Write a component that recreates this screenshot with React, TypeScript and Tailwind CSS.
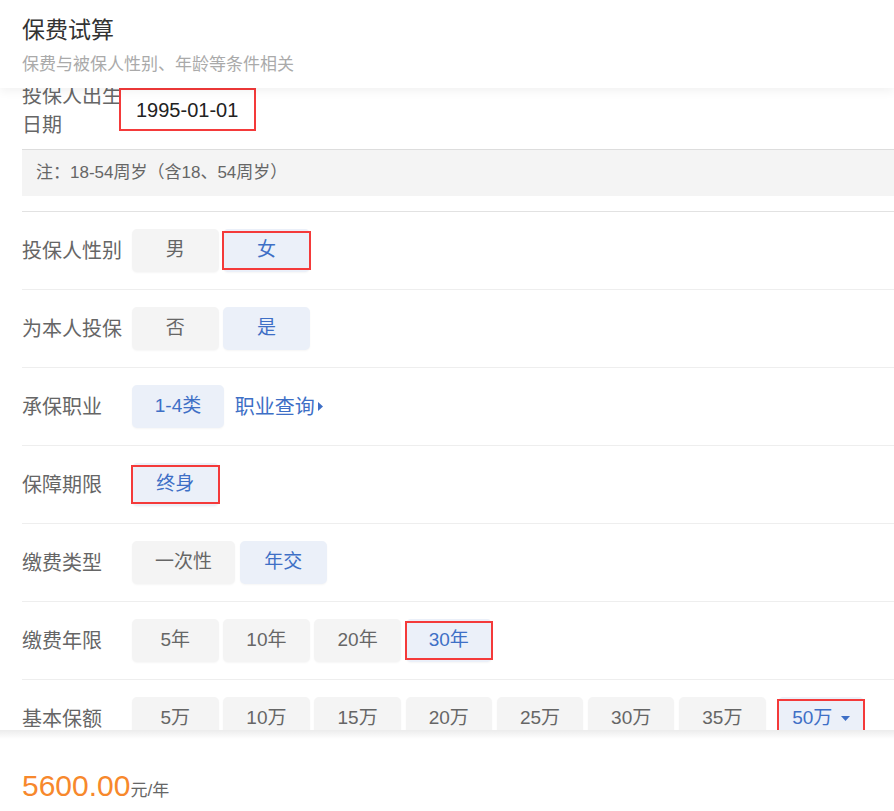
import React from 'react';

/* ─── DATA ─── */

type Opt = { label: string; active?: boolean; mark?: boolean; w?: string };

const rows: { title: string; options: Opt[]; extra?: 'link' }[] = [
  {
    title: '投保人性别',
    options: [{ label: '男' }, { label: '女', active: true, mark: true }],
  },
  {
    title: '为本人投保',
    options: [{ label: '否' }, { label: '是', active: true }],
  },
  {
    title: '承保职业',
    options: [{ label: '1-4类', active: true, w: 'w-[92px]' }],
    extra: 'link',
  },
  {
    title: '保障期限',
    options: [{ label: '终身', active: true, mark: true }],
  },
  {
    title: '缴费类型',
    options: [{ label: '一次性', w: 'w-[103px]' }, { label: '年交', active: true, w: 'w-[87px]' }],
  },
  {
    title: '缴费年限',
    options: [
      { label: '5年' },
      { label: '10年' },
      { label: '20年' },
      { label: '30年', active: true, mark: true },
    ],
  },
];

const amounts = ['5万', '10万', '15万', '20万', '25万', '30万', '35万'];

const font = "font-['Liberation_Sans','Noto_Sans_CJK_SC',sans-serif]";

/* ─── PIECES ─── */

// red annotation rectangle drawn over a selected item
function Mark() {
  return <span className="pointer-events-none absolute inset-x-[-1px] inset-y-[2px] border-2 border-[#f43a3a]" />;
}

function OptionButton({ opt }: { opt: Opt }) {
  return (
    <div
      className={`relative ${opt.w ?? 'w-[86.5px]'} h-[43px] shrink-0 rounded-[5px] flex items-center justify-center text-[19px] shadow-[0_1px_2px_rgba(0,0,0,0.04)] ${
        opt.active ? 'bg-[#ebf0f9] text-[#3e6fc6]' : 'bg-[#f4f4f4] text-[#666]'
      }`}
    >
      {opt.label}
      {opt.mark && <Mark />}
    </div>
  );
}

function Row({ title, children }: { title: string; children: React.ReactNode }) {
  return (
    <div className="flex items-center py-[17px] border-b border-[#eeeeee]">
      <div className="w-[110px] shrink-0 text-[20px] text-[#666]">{title}</div>
      <div className="flex items-center gap-[4.7px]">{children}</div>
    </div>
  );
}

/* ─── APP ─── */

export default function App() {
  return (
    <div className={`${font} h-[811px] w-[894px] flex flex-col bg-white overflow-hidden`}>
      {/* Header */}
      <div className="relative z-10 h-[88px] shrink-0 bg-white px-[22px] pt-[15px] shadow-[0_3px_10px_rgba(0,0,0,0.06)]">
        <div className="text-[23px] leading-[30px] text-[#333]">保费试算</div>
        <div className="mt-[8px] text-[17px] leading-[24px] text-[#aaa]">保费与被保人性别、年龄等条件相关</div>
      </div>

      {/* Scrolled form */}
      <div className="flex-1 overflow-hidden">
        <div className="-mt-[6px] pl-[22px]">
          <div className="border-b border-[#e2e2e2] pb-[15px]">
            <div className="flex items-start">
              <div className="w-[100px] shrink-0 text-[20px] leading-[29px] text-[#666]">投保人出生日期</div>
              <div className="-ml-[3px] mt-[6px] h-[43px] w-[137px] border-2 border-[#f43a3a] bg-white flex items-center pl-[15px] text-[20px] text-[#222]">
                1995-01-01
              </div>
            </div>
            <div className="mt-[9px] h-[47px] border-t border-[#dddddd] bg-[#f4f4f4] flex items-center pl-[14px] text-[17px] text-[#666]">
              注：18-54周岁（含18、54周岁）
            </div>
          </div>

          {rows.map((r) => (
            <Row key={r.title} title={r.title}>
              {r.options.map((o) => (
                <OptionButton key={o.label} opt={o} />
              ))}
              {r.extra === 'link' && (
                <div className="ml-[6px] flex items-center gap-[3px] text-[20px] text-[#3e6fc6]">
                  职业查询
                  <svg width="5" height="9" viewBox="0 0 5 9" className="fill-[#3e6fc6]">
                    <path d="M0 0 L5 4.5 L0 9 Z" />
                  </svg>
                </div>
              )}
            </Row>
          ))}

          <Row title="基本保额">
            {amounts.map((a) => (
              <OptionButton key={a} opt={{ label: a }} />
            ))}
            <div className="relative ml-[8px] w-[86px] h-[43px] shrink-0 rounded-[5px] bg-[#ebf0f9] text-[#3e6fc6] text-[19px] flex items-center justify-center gap-[9px]">
              50万
              <svg width="9" height="5" viewBox="0 0 9 5" className="fill-[#3e6fc6]">
                <path d="M0 0 L9 0 L4.5 5 Z" />
              </svg>
              <Mark />
            </div>
          </Row>
        </div>
      </div>

      {/* Footer */}
      <div className="h-[81px] shrink-0 bg-white">
        <div className="h-[9px] bg-gradient-to-b from-[#ececec] to-white" />
        <div className="flex items-baseline pl-[22px] pt-[32px]">
          <span className="text-[30px] leading-none text-[#f7882c]">5600.00</span>
          <span className="text-[17px] text-[#666]">元/年</span>
        </div>
      </div>
    </div>
  );
}
